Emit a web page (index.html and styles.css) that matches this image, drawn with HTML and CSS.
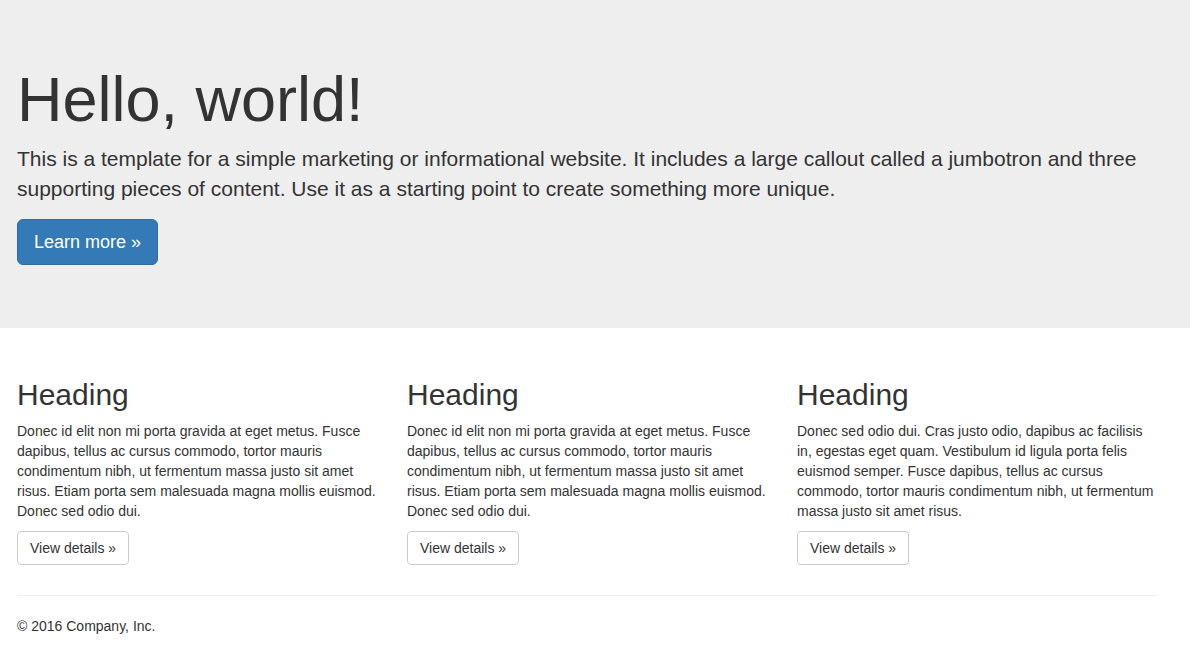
FILE: index.html
```html
<!DOCTYPE html>
<html lang="en">
<head>
<meta charset="utf-8">
<title>Jumbotron Template</title>
<link rel="stylesheet" href="styles.css">
</head>
<body>
<div class="jumbotron">
  <div class="container">
    <h1>Hello, world!</h1>
    <p>This is a template for a simple marketing or informational website. It includes a large callout called a jumbotron and three supporting pieces of content. Use it as a starting point to create something more unique.</p>
    <p><a class="btn btn-primary btn-lg" href="#">Learn more &raquo;</a></p>
  </div>
</div>
<div class="container">
  <div class="row">
    <div class="col">
      <h2>Heading</h2>
      <p>Donec id elit non mi porta gravida at eget metus. Fusce dapibus, tellus ac cursus commodo, tortor mauris condimentum nibh, ut fermentum massa justo sit amet risus. Etiam porta sem malesuada magna mollis euismod. Donec sed odio dui. </p>
      <p><a class="btn btn-default" href="#">View details &raquo;</a></p>
    </div>
    <div class="col">
      <h2>Heading</h2>
      <p>Donec id elit non mi porta gravida at eget metus. Fusce dapibus, tellus ac cursus commodo, tortor mauris condimentum nibh, ut fermentum massa justo sit amet risus. Etiam porta sem malesuada magna mollis euismod. Donec sed odio dui. </p>
      <p><a class="btn btn-default" href="#">View details &raquo;</a></p>
    </div>
    <div class="col">
      <h2>Heading</h2>
      <p>Donec sed odio dui. Cras justo odio, dapibus ac facilisis in, egestas eget quam. Vestibulum id ligula porta felis euismod semper. Fusce dapibus, tellus ac cursus commodo, tortor mauris condimentum nibh, ut fermentum massa justo sit amet risus.</p>
      <p><a class="btn btn-default" href="#">View details &raquo;</a></p>
    </div>
  </div>
  <hr>
  <footer>
    <p>&copy; 2016 Company, Inc.</p>
  </footer>
</div>
</body>
</html>
```
FILE: styles.css
```css
* { box-sizing: border-box; }
html, body { margin: 0; padding: 0; }
body {
  font-family: "Liberation Sans", Arial, sans-serif;
  font-size: 14px;
  line-height: 1.42857143;
  color: #333;
  background: #fff;
}
p { margin: 0 0 10px; }
a { text-decoration: none; }
.container {
  width: 1157px;
  padding-left: 17px;
}
.jumbotron {
  background: #eee;
  padding: 45px 0 48px;
  margin-bottom: 30px;
}
.jumbotron h1 {
  font-size: 63px;
  font-weight: 500;
  line-height: 1.1;
  margin: 20px 0 10px;
}
.jumbotron p {
  font-size: 21px;
  font-weight: 200;
  margin-bottom: 15px;
}
.row {
  display: grid;
  grid-template-columns: repeat(3, 360px);
  column-gap: 30px;
}
.col h2 {
  font-size: 30px;
  font-weight: 500;
  line-height: 1.1;
  margin: 20px 0 10px;
}
.btn {
  display: inline-block;
  padding: 6px 12px;
  font-size: 14px;
  line-height: 1.42857143;
  border: 1px solid transparent;
  border-radius: 4px;
  vertical-align: middle;
  white-space: nowrap;
}
.btn-lg {
  padding: 10px 16px;
  font-size: 18px;
  line-height: 1.3333333;
  border-radius: 6px;
}
.btn-primary {
  color: #fff;
  background: #337ab7;
  border-color: #2e6da4;
}
.btn-default {
  color: #333;
  background: #fff;
  border-color: #ccc;
}
hr {
  margin: 20px 0;
  border: 0;
  border-top: 1px solid #eee;
  height: 0;
}
```
